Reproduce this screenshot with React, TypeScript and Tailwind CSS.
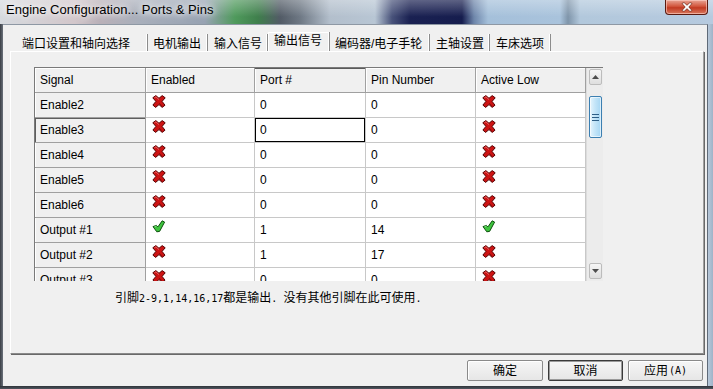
import React from 'react';

type Row = { signal: string; enabled: boolean; port: string; pin: string; activeLow: boolean };

const rows: Row[] = [
  { signal: 'Enable2', enabled: false, port: '0', pin: '0', activeLow: false },
  { signal: 'Enable3', enabled: false, port: '0', pin: '0', activeLow: false },
  { signal: 'Enable4', enabled: false, port: '0', pin: '0', activeLow: false },
  { signal: 'Enable5', enabled: false, port: '0', pin: '0', activeLow: false },
  { signal: 'Enable6', enabled: false, port: '0', pin: '0', activeLow: false },
  { signal: 'Output #1', enabled: true, port: '1', pin: '14', activeLow: true },
  { signal: 'Output #2', enabled: false, port: '1', pin: '17', activeLow: false },
  { signal: 'Output #3', enabled: false, port: '0', pin: '0', activeLow: false },
];

const tabs = [
  { label: '端口设置和轴向选择', cls: 'w-[138px] pl-[12px]' },
  { label: '电机输出', cls: 'w-[60px] pl-[5px]' },
  { label: '输入信号', cls: 'w-[60px] pl-[6px]' },
  { label: '输出信号', cls: 'w-[62px] pl-[6px]', active: true },
  { label: '编码器/电子手轮', cls: 'w-[100px] pl-[5px]' },
  { label: '主轴设置', cls: 'w-[60px] pl-[6px]' },
  { label: '车床选项', cls: 'w-[61px] pl-[6px]' },
];

const CrossIcon = () => (
  <svg width="14" height="13" viewBox="0 0 14 13">
    <path
      d="M0.8 2.8 L3.8 0.6 L7 3.3 L10.2 0.6 L13.2 2.8 L10.1 6.4 L13 10.2 L10.2 12.4 L7 9.6 L3.6 12.4 L0.9 10.1 L3.9 6.4 Z"
      fill="#cc1414"
      stroke="#560404"
      strokeWidth="1"
      strokeLinejoin="round"
    />
    <path d="M2.4 2.9 L3.9 1.8 L7 4.6" stroke="#f07070" strokeWidth="0.9" fill="none" />
    <path d="M7 8.2 L10.2 11" stroke="#8e0a0a" strokeWidth="0.9" fill="none" />
  </svg>
);

const CheckIcon = () => (
  <svg width="14" height="13" viewBox="0 0 14 13">
    <path
      d="M1 6.6 L4.4 5.4 L5.9 6.9 L10.2 0.8 L12.6 2.1 L7.6 11.4 L4.8 11.8 Z"
      fill="#3fc43f"
      stroke="#0c4f0c"
      strokeWidth="1"
      strokeLinejoin="round"
    />
    <path d="M2.6 6.6 L4.3 6.1" stroke="#a2f2a2" strokeWidth="0.8" fill="none" />
  </svg>
);

const Mark = ({ on }: { on: boolean }) => (on ? <CheckIcon /> : <CrossIcon />);

const Mono = ({ children }: { children: React.ReactNode }) => (
  <span className="font-['DejaVu_Sans_Mono',monospace] text-[10px]">{children}</span>
);

export default function App() {
  return (
    <div className="w-[713px] h-[389px] flex flex-col overflow-hidden font-['Liberation_Sans','Noto_Sans_CJK_SC',sans-serif] text-[12px] text-black bg-[#4a4f58]">
      {/* title bar */}
      <div className="h-[24px] flex items-start justify-between bg-[linear-gradient(to_bottom,rgba(255,255,255,0.3),rgba(255,255,255,0)_70%),linear-gradient(to_right,#d6dadf_0px,#d2c6ca_75px,#b9b0b8_100px,#a8afbb_140px,#97a2b2_205px,#4f9a5c_235px,#3f7f4c_258px,#525b66_280px,#6e7884_300px,#b3bfcc_330px,#b8c6d4_375px,#48527a_392px,#1a2152_410px,#161d4e_462px,#6e86aa_474px,#a5c0da_488px,#a9c3dc_560px,#7f95aa_568px,#b2c8dc_580px,#b6cadf_713px)]">
        <div className="pl-[6px] pt-[2px] text-[13px] leading-[16px] text-black [text-shadow:0_0_6px_#ffffff,0_0_10px_#ffffff]">
          Engine Configuration... Ports &amp; Pins
        </div>
        <div className="mr-[5px] w-[43px] h-[15px] rounded-b-[4px] border border-t-0 border-[#5a1a10] bg-[linear-gradient(to_bottom,#e8a595,#d2563d_45%,#c23a22_55%,#d8785e)] shadow-[inset_0_0_0_1px_rgba(255,210,200,0.6)] flex items-center justify-center">
          <svg width="12" height="10" viewBox="0 0 12 10">
            <path
              d="M1 1.5 L3 0.5 L6 3.3 L9 0.5 L11 1.5 L7.8 5 L11 8.5 L9 9.5 L6 6.7 L3 9.5 L1 8.5 L4.2 5 Z"
              fill="#ffffff"
              stroke="#6a2212"
              strokeWidth="0.7"
              strokeLinejoin="round"
            />
          </svg>
        </div>
      </div>

      <div className="flex flex-1 min-h-0">
        <div className="w-[3px] bg-[linear-gradient(to_right,#3a3e45,#6b727c)]" />

        {/* client */}
        <div className="w-[705px] flex flex-col bg-[#f0f0f0] pt-[7px] pl-[7px] pr-[3px] border-r border-[#5f6a78] border-t border-t-[#8e98a4]">
          {/* tabs */}
          <div className="h-[19px] flex items-end">
            {tabs.map((t) =>
              t.active ? (
                <div
                  key={t.label}
                  className={`${t.cls} h-[19px] flex items-center pb-[2px] border-r border-[#8c8c8c] shadow-[inset_-1px_0_0_#ffffff,inset_1px_1px_0_#ffffff] whitespace-nowrap`}
                >
                  {t.label}
                </div>
              ) : (
                <div
                  key={t.label}
                  className={`${t.cls} h-[17px] flex items-center pt-[2px] border-r border-[#8c8c8c] shadow-[inset_-1px_0_0_#ffffff] whitespace-nowrap`}
                >
                  {t.label}
                </div>
              )
            )}
          </div>

          {/* panel */}
          <div className="w-[694px] h-[303px] flex flex-col border-t border-l border-white border-r border-b border-r-[#a0a0a0] border-b-[#8a8a8a] shadow-[1px_1px_0_#696969]">
            <div className="ml-[23px] mt-[15px] w-[569px] h-[214px] flex border-l border-t border-[#7a7a7a]">
              <div className="w-[551px] flex flex-col">
                {/* header */}
                <div className="h-[25px] flex">
                  {['Signal', 'Enabled', 'Port #', 'Pin Number', 'Active Low'].map((h, i) => {
                    const w = ['w-[111px]', 'w-[109px]', 'w-[111px]', 'w-[110px]', 'w-[110px]'][i];
                    return (
                      <div
                        key={h}
                        className={`${w} h-[25px] flex items-center px-[5px] bg-[#f0f0f0] border-r border-b border-[#a0a0a0] ${
                          h === 'Port #' ? 'shadow-[inset_0_1px_0_#5a5a5a,inset_1px_0_0_#ffffff]' : 'shadow-[inset_1px_1px_0_#ffffff]'
                        }`}
                      >
                        {h}
                      </div>
                    );
                  })}
                </div>
                {/* body */}
                <div className="h-[188px] overflow-hidden flex flex-col">
                  {rows.map((r) => (
                    <div key={r.signal} className="h-[25px] flex shrink-0">
                      <div
                        className={`w-[111px] flex items-center px-[5px] bg-[#f0f0f0] border-r border-b border-[#a0a0a0] ${
                          r.signal === 'Enable3' ? 'shadow-[inset_1px_1px_0_#5e5e5e]' : 'shadow-[inset_1px_0_0_#ffffff]'
                        }`}
                      >
                        {r.signal}
                      </div>
                      <div className="w-[109px] flex items-start pt-[2px] pl-[6px] bg-white border-r border-b border-[#c8c8c8]">
                        <Mark on={r.enabled} />
                      </div>
                      <div
                        className={`w-[111px] flex items-center px-[5px] bg-white border-r border-b border-[#c8c8c8] ${
                          r.signal === 'Enable3' ? 'shadow-[inset_0_0_0_1px_#000000]' : ''
                        }`}
                      >
                        {r.port}
                      </div>
                      <div className="w-[110px] flex items-center px-[5px] bg-white border-r border-b border-[#c8c8c8]">
                        {r.pin}
                      </div>
                      <div className="w-[110px] flex items-start pt-[2px] pl-[6px] bg-white border-r border-b border-[#c8c8c8]">
                        <Mark on={r.activeLow} />
                      </div>
                    </div>
                  ))}
                </div>
              </div>

              {/* scrollbar */}
              <div className="w-[17px] h-[213px] flex flex-col pl-[2px] pr-[1px] pt-[1px] pb-[2px] bg-[#ececec] border-l border-[#dcdcdc]">
                <div className="h-[16px] rounded-[2px] border border-[#bcbcbc] bg-[linear-gradient(to_bottom,#f6f6f6,#dedede)] flex items-center justify-center">
                  <svg width="7" height="4" viewBox="0 0 7 4">
                    <path d="M0 4 L3.5 0 L7 4 Z" fill="#4d4d4d" />
                  </svg>
                </div>
                <div className="mt-[11px] h-[42px] rounded-[2px] border border-[#3c7fb1] bg-[linear-gradient(to_right,#e6f5fd,#c4e5f8_45%,#a6d6f3)] shadow-[inset_0_0_0_1px_rgba(255,255,255,0.6)] flex flex-col items-center justify-center gap-[2px]">
                  <div className="w-[7px] h-[1px] bg-[#2e5f87]" />
                  <div className="w-[7px] h-[1px] bg-[#2e5f87]" />
                  <div className="w-[7px] h-[1px] bg-[#2e5f87]" />
                </div>
                <div className="flex-1" />
                <div className="h-[16px] rounded-[2px] border border-[#bcbcbc] bg-[linear-gradient(to_bottom,#f6f6f6,#dedede)] flex items-center justify-center">
                  <svg width="7" height="4" viewBox="0 0 7 4">
                    <path d="M0 0 L3.5 4 L7 0 Z" fill="#4d4d4d" />
                  </svg>
                </div>
              </div>
            </div>

            <div className="ml-[104px] mt-[8px] leading-[16px] font-['Noto_Sans_CJK_SC',sans-serif] text-[12px] whitespace-nowrap">
              引脚<Mono>2-9,1,14,16,17</Mono>都是输出<Mono>. </Mono>没有其他引脚在此可使用<Mono>.</Mono>
            </div>
          </div>

          {/* buttons */}
          <div className="mt-[6px] pr-[1px] flex justify-end gap-[5px]">
            <button className="w-[76px] h-[21px] rounded-[2px] border border-[#8a8a8a] bg-[linear-gradient(to_bottom,#f6f6f6,#e6e6e6)] shadow-[inset_1px_1px_0_#ffffff] flex items-center justify-center text-[12px] leading-none">
              确定
            </button>
            <button className="w-[75px] h-[21px] rounded-[2px] border border-[#3a3a3a] bg-[linear-gradient(to_bottom,#f6f6f6,#e6e6e6)] shadow-[inset_0_0_0_1px_#9a9a9a] flex items-center justify-center text-[12px] leading-none">
              取消
            </button>
            <button className="w-[75px] h-[21px] rounded-[2px] border border-[#8a8a8a] bg-[linear-gradient(to_bottom,#f6f6f6,#e6e6e6)] shadow-[inset_1px_1px_0_#ffffff] flex items-center justify-center text-[12px] leading-none">
              应用<span className="font-['DejaVu_Sans_Mono',monospace] text-[10px] ml-[1px]">(A)</span>
            </button>
          </div>
        </div>

        <div className="w-[5px] bg-[linear-gradient(to_right,#b7c8da,#9fb3c8)]" />
      </div>
      <div className="h-[3px] bg-[linear-gradient(to_bottom,#2e3238,#50565f)]" />
    </div>
  );
}
